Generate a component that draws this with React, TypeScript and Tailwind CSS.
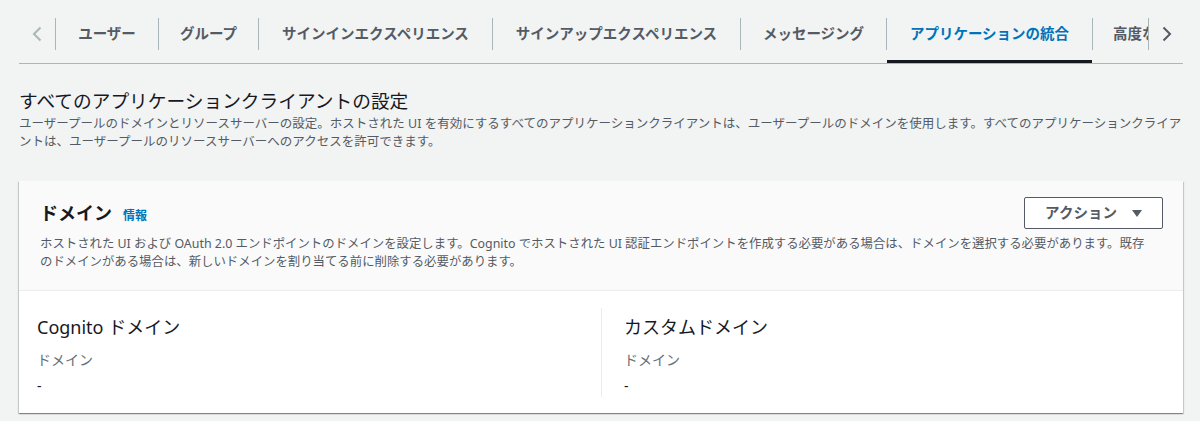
import React from 'react';

const tabs = [
  { label: 'ユーザー', width: 'w-[103px]' },
  { label: 'グループ', width: 'w-[100px]' },
  { label: 'サインインエクスペリエンス', width: 'w-[234px]' },
  { label: 'サインアップエクスペリエンス', width: 'w-[248px]' },
  { label: 'メッセージング', width: 'w-[146px]' },
  { label: 'アプリケーションの統合', width: 'w-[206px]', active: true },
];

const Chevron: React.FC<{ dir: 'left' | 'right'; color: string }> = ({ dir, color }) => (
  <svg width="10" height="16" viewBox="0 0 10 16" fill="none">
    <path
      d={dir === 'left' ? 'M8.5 1.5 L2 8 L8.5 14.5' : 'M1.5 1.5 L8 8 L1.5 14.5'}
      stroke={color}
      strokeWidth="2"
    />
  </svg>
);

const DomainColumn: React.FC<{ title: string; divider?: boolean }> = ({ title, divider }) => (
  <div className={`pt-[7px] pb-[1px] ${divider ? 'border-l border-[#eaeded] pl-[22px]' : ''}`}>
    <h3 className="text-[18px] leading-[24px] text-[#16191f]">{title}</h3>
    <div className="mt-[11px] text-[14px] leading-[20px] text-[#687078]">ドメイン</div>
    <div className="mt-[6px] text-[14px] leading-[20px] text-[#16191f]">-</div>
  </div>
);

const App: React.FC = () => {
  return (
    <div className="min-h-[421px] bg-[#f2f3f3] pl-[19px] pr-[17px] font-['Noto_Sans','Noto_Sans_CJK_JP',sans-serif]">
      {/* tab bar */}
      <div className="flex border-b border-[#aab7b8]">
        <div className="w-[36px] h-[63px] pt-[18px] flex justify-center">
          <div className="h-[32px] flex items-center">
            <Chevron dir="left" color="#aab7b8" />
          </div>
        </div>
        {tabs.map((tab) => (
          <div key={tab.label} className={`relative h-[63px] pt-[18px] ${tab.width}`}>
            <div
              className={`h-[32px] border-l border-[#aab7b8] flex items-center justify-center text-[14.5px] font-bold whitespace-nowrap ${
                tab.active ? 'text-[#0073bb]' : 'text-[#545b64]'
              }`}
            >
              {tab.label}
            </div>
            {tab.active && <div className="absolute left-[1px] right-0 bottom-0 h-[3px] bg-[#16191f]" />}
          </div>
        ))}
        <div className="w-[56px] h-[63px] pt-[18px]">
          <div className="h-[32px] border-l border-[#aab7b8] flex items-center pl-[20px] overflow-hidden whitespace-nowrap text-[14.5px] font-bold text-[#545b64]">
            高度なセキュリティ
          </div>
        </div>
        <div className="w-[35px] h-[63px] pt-[18px]">
          <div className="h-[32px] border-l border-[#aab7b8] flex items-center pl-[13px]">
            <Chevron dir="right" color="#545b64" />
          </div>
        </div>
      </div>

      {/* section heading */}
      <div className="mt-[25px]">
        <h1 className="text-[18.7px] leading-[24px] text-[#16191f]">すべてのアプリケーションクライアントの設定</h1>
        <p className="mt-[2px] text-[12.5px] leading-[18px] text-[#545b64] whitespace-nowrap">
          ユーザープールのドメインとリソースサーバーの設定。ホストされた UI を有効にするすべてのアプリケーションクライアントは、ユーザープールのドメインを使用します。すべてのアプリケーションクライア
          <br />
          ントは、ユーザープールのリソースサーバーへのアクセスを許可できます。
        </p>
      </div>

      {/* domain card */}
      <div className="mt-[30px] bg-white shadow-[0_1px_1px_0_rgba(0,28,36,0.3),1px_1px_1px_0_rgba(0,28,36,0.15),-1px_1px_1px_0_rgba(0,28,36,0.15)]">
        <div className="bg-[#fafafa] border-b border-[#eaeded] pt-[16px] pb-[19px] pl-[21px] pr-[20px]">
          <div className="flex items-center justify-between h-[32px]">
            <div className="flex items-baseline gap-[11px]">
              <h2 className="text-[18px] font-bold text-[#16191f]">ドメイン</h2>
              <a className="text-[12px] font-bold text-[#0073bb]">情報</a>
            </div>
            <button className="w-[139px] h-[32px] border border-[#545b64] rounded-[2px] bg-white flex items-center justify-center gap-[15px] text-[14.5px] font-bold text-[#545b64]">
              アクション
              <svg width="10" height="7" viewBox="0 0 10 7">
                <polygon points="0,0 10,0 5,7" fill="#545b64" />
              </svg>
            </button>
          </div>
          <p className="mt-[6px] text-[12.4px] leading-[18px] text-[#545b64] whitespace-nowrap">
            ホストされた UI および OAuth 2.0 エンドポイントのドメインを設定します。Cognito でホストされた UI 認証エンドポイントを作成する必要がある場合は、ドメインを選択する必要があります。既存
            <br />
            のドメインがある場合は、新しいドメインを割り当てる前に削除する必要があります。
          </p>
        </div>
        <div className="grid grid-cols-2 px-[18px] pt-[17px] pb-[16px]">
          <DomainColumn title="Cognito ドメイン" />
          <DomainColumn title="カスタムドメイン" divider />
        </div>
      </div>
    </div>
  );
};

export default App;
